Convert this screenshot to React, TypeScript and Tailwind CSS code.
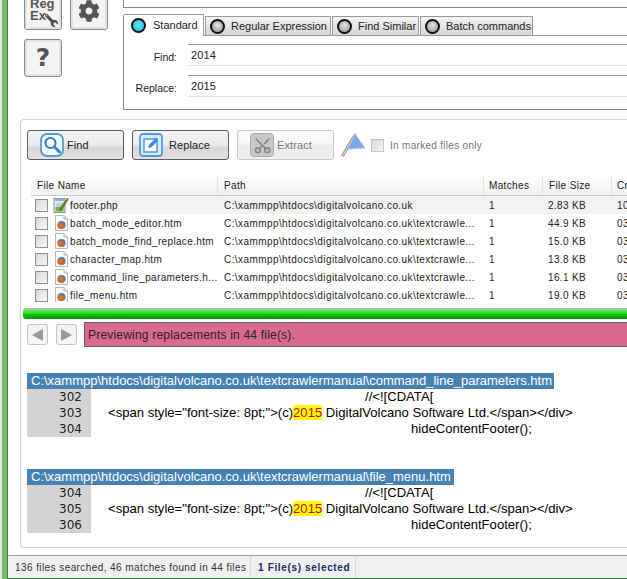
import { FaCog, FaWrench } from 'react-icons/fa';
import { Scissors } from 'lucide-react';

const ui = "font-['Liberation_Sans',Arial,sans-serif]";

const files = [
  { name: 'footer.php', path: 'C:\\xammpp\\htdocs\\digitalvolcano.co.uk', size: '2.83 KB', cr: '10', php: true },
  { name: 'batch_mode_editor.htm', path: 'C:\\xammpp\\htdocs\\digitalvolcano.co.uk\\textcrawle...', size: '44.9 KB', cr: '03' },
  { name: 'batch_mode_find_replace.htm', path: 'C:\\xammpp\\htdocs\\digitalvolcano.co.uk\\textcrawle...', size: '15.0 KB', cr: '03' },
  { name: 'character_map.htm', path: 'C:\\xammpp\\htdocs\\digitalvolcano.co.uk\\textcrawle...', size: '13.8 KB', cr: '03' },
  { name: 'command_line_parameters.h...', path: 'C:\\xammpp\\htdocs\\digitalvolcano.co.uk\\textcrawle...', size: '16.1 KB', cr: '03' },
  { name: 'file_menu.htm', path: 'C:\\xammpp\\htdocs\\digitalvolcano.co.uk\\textcrawle...', size: '19.0 KB', cr: '03' },
];

function Lamp({ on }: { on?: boolean }) {
  return (
    <span
      className={
        'block h-[15px] w-[15px] flex-none rounded-full border-[2px] border-[#111] ' +
        (on
          ? 'bg-[radial-gradient(circle_at_50%_40%,#5fe6f2,#19b6d2)]'
          : 'bg-[radial-gradient(circle_at_50%_40%,#e6e6e6,#8a8a8a)]')
      }
    />
  );
}

function Tab({ label, width }: { label: string; width: string }) {
  return (
    <div className={`mr-[1px] flex h-[19px] items-center gap-[6px] whitespace-nowrap border-x border-t border-[#999] bg-gradient-to-b from-[#f4f4f4] to-[#d6d6d6] pl-[4px] text-[11px] text-[#222] ${width}`}>
      <Lamp />
      <span>{label}</span>
    </div>
  );
}

function FileIcon({ php }: { php?: boolean }) {
  if (php) {
    return (
      <svg width="16" height="16" viewBox="0 0 16 16" className="flex-none">
        <rect x="1" y="1.5" width="11" height="14" fill="#dfe9f2" stroke="#7f93a6" />
        <rect x="2" y="1.5" width="9" height="2.5" fill="#8fb4d6" />
        <path d="M3 7h7M3 9h7" stroke="#a9b7c4" />
        <rect x="2.5" y="10" width="8" height="4.5" fill="#7fb23a" />
        <path d="M7 11 14.5 1l1 1L9 12.5 6.5 13.5Z" fill="#6b8a2c" stroke="#46581c" strokeWidth=".5" />
      </svg>
    );
  }
  return (
    <svg width="13" height="16" viewBox="0 0 13 16" className="flex-none">
      <path d="M.5.5h8.5l3.5 3.5v11.5H.5Z" fill="#fafafa" stroke="#b4b9bf" />
      <path d="M9 .5V4h3.5" fill="#e4e8ec" stroke="#b4b9bf" />
      <circle cx="6.5" cy="10" r="4" fill="#4a7cbc" />
      <path d="M2.500 9.500c.4-1.600 1.400-2.600 2.600-3-.6.7-.7 1.300-.4 1.800 1.300-.6 3-.2 3.500 1.200.5.900-.2 2-1.500 2.100 1.700.5 3.400-.5 3.800-2.200.2 2.700-1.700 4.600-4 4.600-2.500 0-4.200-2-4-4.500Z" fill="#e36a1e" />
    </svg>
  );
}

function ActionButton({ label, icon, disabled, pad }: { label: string; icon: React.ReactNode; disabled?: boolean; pad: string }) {
  return (
    <div
      className={
        `flex h-[30px] w-[97px] flex-none items-center rounded-[3px] border text-[11px] tracking-[0.1px] ${pad} ` +
        (disabled
          ? 'border-[#c8c8c8] bg-[linear-gradient(#fbfbfb,#f4f4f4_50%,#ececec_50%,#f0f0f0)] text-[#777]'
          : 'border-[#5c5c5c] bg-[linear-gradient(#f3f3f3,#ebebeb_50%,#d6d6d6_60%,#e2e2e2)] text-[#222]')
      }
    >
      {icon}
      {label}
    </div>
  );
}

function ToolButton({ children, className }: { children: React.ReactNode; className?: string }) {
  return (
    <div className={`flex w-[38px] flex-none rounded-[3px] border border-[#8a8a8a] bg-[#f3f3f3] shadow-[inset_0_0_0_2px_#e2e2e2] ${className ?? ''}`}>
      {children}
    </div>
  );
}

function Checkbox({ faded }: { faded?: boolean }) {
  return (
    <span className={`block h-[13px] w-[13px] flex-none border bg-gradient-to-br from-[#d8d8d8] to-[#f6f6f6] ${faded ? 'border-[#c4c4c4]' : 'border-[#8f8f8f]'}`} />
  );
}

function ResultBlock({ path, width, start }: { path: string; width: string; start: number }) {
  const lines = [
    { pad: 'pl-[274px]', text: '//<![CDATA[' },
    { pad: 'pl-[17px]', text: null },
    { pad: 'pl-[320px]', text: 'hideContentFooter();' },
  ];
  return (
    <div>
      <div className={`flex h-[16px] items-center bg-[#4682b4] pl-[4px] text-[13px] text-white ${width}`}>{path}</div>
      {lines.map((l, i) => (
        <div key={i} className="flex h-[16px] items-center whitespace-nowrap text-[13.1px] text-black">
          <div className="flex h-full w-[64px] flex-none items-center justify-end bg-[#d3d3d3] pr-[9px] font-['DejaVu_Sans',sans-serif] text-[12px] text-[#222]">
            {start + i}
          </div>
          <div className={l.pad}>
            {l.text ?? (
              <>
                {'<span style="font-size: 8pt;">(c)'}
                <span className="bg-[#ffff00] text-[#e00000]">2015</span>
                {' DigitalVolcano Software Ltd.</span></div>'}
              </>
            )}
          </div>
        </div>
      ))}
    </div>
  );
}

export default function App() {
  return (
    <div className={`flex h-[579px] w-[627px] overflow-hidden bg-white ${ui}`}>
      {/* green window edge */}
      <div className="h-full w-[8px] flex-none border-r border-[#4a7a45] bg-[#6fbf62] shadow-[inset_2px_0_0_#e8e8e8]" />

      <div className="flex min-w-0 flex-1 flex-col">
        {/* top area */}
        <div className="flex h-[119px] flex-none pl-[16px]">
          <div className="w-[99px] flex-none">
            <div className="-mt-[8px] flex gap-[8px]">
              <ToolButton className="relative h-[38px] items-start justify-start pl-[5px] pt-[5px]">
                <span className="text-[13px] font-bold leading-[12px] text-[#555]">Reg<br />Ex</span>
                <FaWrench className="absolute bottom-[2px] right-[3px] rotate-90 text-[13px] text-[#555]" />
              </ToolButton>
              <ToolButton className="h-[38px] items-center justify-center">
                <FaCog className="text-[22px] text-[#555]" />
              </ToolButton>
            </div>
            <ToolButton className="mt-[9px] h-[38px] items-center justify-center">
              <span className="font-['DejaVu_Sans',sans-serif] text-[25px] font-bold text-[#555]">?</span>
            </ToolButton>
          </div>

          <div className="min-w-0 flex-1">
            <div className="h-[8px] border-b border-l border-[#8a8a8a]" />
            <div className="mt-[7px] h-[95px] border-b border-l border-[#8a8a8a]">
              <div className="flex h-[21px] items-end border-b border-[#999]">
                <div className="-mb-px mr-px flex h-[22px] w-[80px] items-center gap-[7px] border-r border-t border-[#999] bg-white pl-[7px] text-[11px] text-[#222]">
                  <Lamp on />
                  <span>Standard</span>
                </div>
                <Tab label="Regular Expression" width="w-[126px]" />
                <Tab label="Find Similar" width="w-[87px]" />
                <Tab label="Batch commands" width="w-[113px]" />
              </div>
              <div className="mt-[8px] flex h-[22px]">
                <div className="w-[54px] pr-px pt-[6px] text-right text-[10.5px] text-[#222]">Find:</div>
                <div className="ml-[10px] flex h-[22px] flex-1 items-center border-b border-t border-b-[#e4e4e4] border-t-[#999] pl-[3px] text-[11px] tracking-[0.1px] text-[#222]">2014</div>
              </div>
              <div className="mt-[9px] flex h-[22px]">
                <div className="w-[54px] pr-px pt-[6px] text-right text-[10.5px] text-[#222]">Replace:</div>
                <div className="ml-[10px] flex h-[22px] flex-1 items-center border-b border-t border-b-[#e4e4e4] border-t-[#999] pl-[3px] text-[11px] tracking-[0.1px] text-[#222]">2015</div>
              </div>
            </div>
          </div>
        </div>

        {/* results panel */}
        <div className="ml-[12px] h-[429px] flex-none rounded-bl-[4px] rounded-tl-[4px] border-b border-l border-t border-[#d4d4d4]">
          <div className="mt-[10px] flex items-center pl-[6px]">
            <ActionButton
              pad="pl-[12px] gap-[3px]"
              label="Find"
              icon={
                <svg width="24" height="24" viewBox="0 0 24 24" className="flex-none">
                  <rect x="1" y="1" width="22" height="22" rx="6" fill="#f4f8fc" stroke="#4f9ae0" strokeWidth="1.8" />
                  <circle cx="10.5" cy="10" r="5" fill="#fff" stroke="#2f7fd0" strokeWidth="2.2" />
                  <path d="m14.5 14 5 5" stroke="#2f7fd0" strokeWidth="2.8" strokeLinecap="round" />
                </svg>
              }
            />
            <div className="w-[8px] flex-none" />
            <ActionButton
              pad="pl-[6px] gap-[6px]"
              label="Replace"
              icon={
                <svg width="24" height="24" viewBox="0 0 24 24" className="flex-none">
                  <rect x="1" y="1" width="22" height="22" rx="3" fill="#dcebfa" stroke="#4f9ae0" strokeWidth="1.8" />
                  <rect x="5" y="6" width="13" height="13" fill="#fff" stroke="#4f9ae0" strokeWidth="1.5" />
                  <path d="m9 15 .8-3L17 4.8l2.4 2.4-7.2 7.2Z" fill="#3b8be0" />
                </svg>
              }
            />
            <div className="w-[8px] flex-none" />
            <ActionButton
              disabled
              pad="pl-[12px] gap-[3px]"
              label="Extract"
              icon={
                <span className="flex h-[24px] w-[24px] flex-none items-center justify-center rounded-[4px] border border-[#aaa] bg-[#c8c8c8]">
                  <Scissors size={19} className="-rotate-90 text-[#888]" strokeWidth={2.2} />
                </span>
              }
            />
            <svg width="26" height="26" viewBox="0 0 26 26" className="ml-[6px] flex-none">
              <path d="M3 23 15 3" stroke="#8f8f8f" strokeWidth="3" strokeLinecap="round" />
              <path d="M3 23 15 3" stroke="#dcdcdc" strokeWidth="1.2" strokeLinecap="round" />
              <path d="M15 2 25 16 8 17Z" fill="#7fa6e6" stroke="#a9c0e6" strokeWidth=".8" />
            </svg>
            <div className="ml-[5px]"><Checkbox faded /></div>
            <span className="ml-[6px] text-[10px] tracking-[0.3px] text-[#777]">In marked files only</span>
          </div>

          {/* file table */}
          <div className="ml-[10px] mt-[15px] h-[127px] overflow-hidden">
            <div className="flex h-[21px] border-b border-[#c8c8c8] bg-gradient-to-b from-white to-[#f1f1f1] text-[10px] tracking-[0.35px] text-[#222]">
              <div className="flex w-[187px] flex-none items-center border-r border-[#e4e4e4] pl-[6px]">File Name</div>
              <div className="flex w-[266px] flex-none items-center border-r border-[#e4e4e4] pl-[6px]">Path</div>
              <div className="flex w-[59px] flex-none items-center border-r border-[#e4e4e4] pl-[5px]">Matches</div>
              <div className="flex w-[69px] flex-none items-center border-r border-[#e4e4e4] pl-[6px]">File Size</div>
              <div className="flex items-center pl-[5px]">Cr</div>
            </div>
            {files.map((f, i) => (
              <div key={f.name} className="flex h-[18px] items-center whitespace-nowrap text-[10px] tracking-[0.35px] text-[#222]">
                <div className="flex h-full w-[186px] flex-none items-center">
                  <div className="ml-[4px]"><Checkbox /></div>
                  <div className="ml-[4px] flex w-[18px] flex-none justify-center"><FileIcon php={f.php} /></div>
                  <div className={`flex h-full flex-1 items-center ${i === 0 ? 'bg-[#f2f2f2]' : ''}`}>{f.name}</div>
                </div>
                <div className={`flex h-full flex-1 items-center ${i === 0 ? 'bg-[#f2f2f2]' : ''}`}>
                  <div className="w-[266px] flex-none pl-[7px] tracking-[0.42px]">{f.path}</div>
                  <div className="w-[59px] flex-none pl-[6px]">1</div>
                  <div className="w-[69px] flex-none pl-[6px]">{f.size}</div>
                  <div className="pl-[6px]">{f.cr}</div>
                </div>
              </div>
            ))}
          </div>

          {/* progress */}
          <div className="ml-[2px] mt-[6px] h-[11px] rounded-l-[3px] border-t border-[#b5b5b5] bg-gradient-to-b from-[#7ce87c] via-[#0fd00f] to-[#0a8f0a]" />

          <div className="mt-[3px] flex items-center pl-[6px]">
            <div className="flex h-[21px] w-[21px] items-center justify-center rounded-[3px] border border-[#c4c4c4] bg-[#f4f4f4] text-[#999]">
              <span className="h-0 w-0 border-y-[6px] border-r-[11px] border-y-transparent border-r-[#999]" />
            </div>
            <div className="ml-[8px] flex h-[21px] w-[21px] items-center justify-center rounded-[3px] border border-[#c4c4c4] bg-[#f4f4f4]">
              <span className="h-0 w-0 border-y-[6px] border-l-[11px] border-y-transparent border-l-[#999]" />
            </div>
            <div className="ml-[7px] flex h-[25px] flex-1 items-center border-b border-l border-t border-[#66606a] bg-[#d96b8e] pl-[3px] text-[12px] tracking-[0.2px] text-[#2a2026]">
              Previewing replacements in 44 file(s).
            </div>
          </div>

          {/* preview */}
          <div className="ml-[6px] mt-[26px]">
            <ResultBlock start={302} width="w-[527px]" path="C:\xammpp\htdocs\digitalvolcano.co.uk\textcrawlermanual\command_line_parameters.htm" />
            <div className="h-[32px]" />
            <ResultBlock start={304} width="w-[427px]" path="C:\xammpp\htdocs\digitalvolcano.co.uk\textcrawlermanual\file_menu.htm" />
          </div>
        </div>

        {/* status bar */}
        <div className="mt-[7px] flex h-[23px] flex-none items-center border-t border-[#9a9a9a] bg-[#f0f0f0] text-[10px] tracking-[0.42px]">
          <div className="flex h-full w-[243px] items-center border-r border-[#d8d8d8] pl-[7px] text-[#333]">136 files searched, 46 matches found in 44 files</div>
          <div className="flex h-full w-[105px] items-center border-r border-[#d8d8d8] pl-[7px] font-bold tracking-[0.65px] text-[#1d2a6b]">1 File(s) selected</div>
        </div>
        <div className="h-[1px] flex-none bg-[#4a7a45]" />
      </div>
    </div>
  );
}
